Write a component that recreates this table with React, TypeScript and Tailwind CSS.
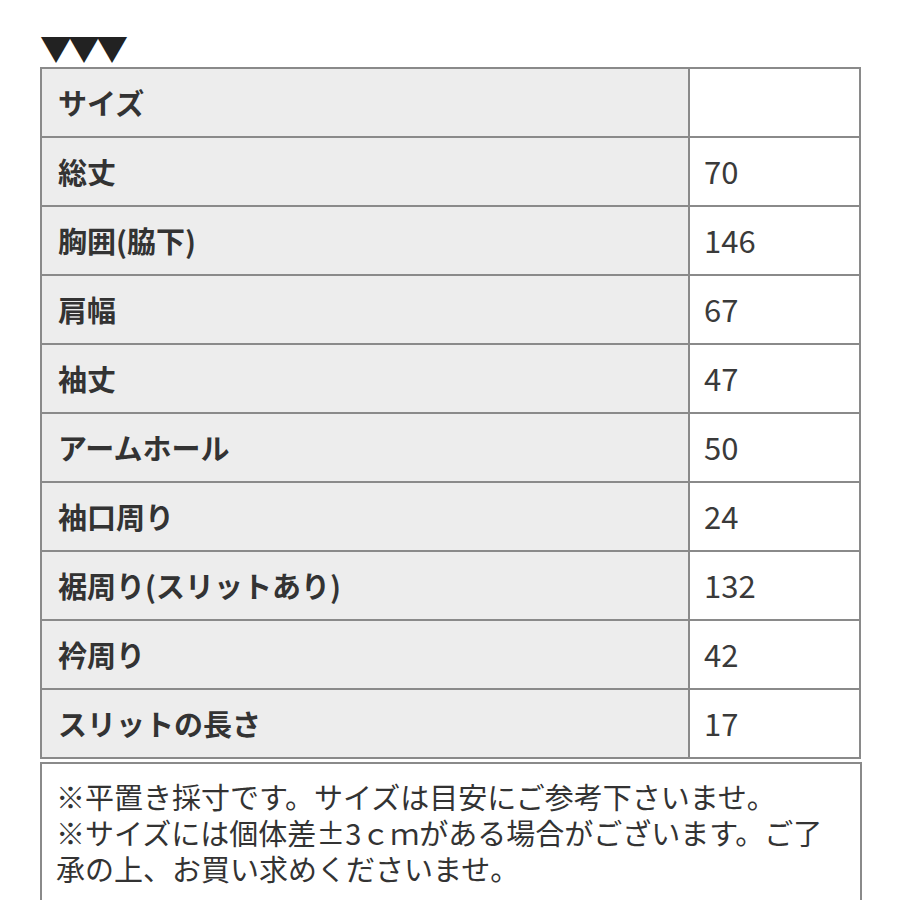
const rows: [string, string][] = [
  ['サイズ', ''],
  ['総丈', '70'],
  ['胸囲(脇下)', '146'],
  ['肩幅', '67'],
  ['袖丈', '47'],
  ['アームホール', '50'],
  ['袖口周り', '24'],
  ['裾周り(スリットあり)', '132'],
  ['衿周り', '42'],
  ['スリットの長さ', '17'],
];

const note =
  '※平置き採寸です。サイズは目安にご参考下さいませ。\n※サイズには個体差±3ｃｍがある場合がございます。ご了承の上、お買い求めくださいませ。';

export default function App() {
  return (
    <div
      className="min-h-[900px] bg-white pl-[40px] pt-[28px] text-[#333]"
      style={{ fontFamily: '"Noto Sans CJK JP", "Noto Sans", sans-serif' }}
    >
      <div className="h-[39px] text-[32px] leading-[39px] tracking-[-4px] text-[#222]">▼▼▼</div>
      <table className="w-[821px] border-collapse border-2 border-[#8a8a8a]">
        <tbody>
          {rows.map(([label, value]) => (
            <tr key={label} className="h-[69px]">
              <td className="w-[648px] border-2 border-[#8a8a8a] bg-[#ededed] pl-[16px] text-[29px] font-bold">
                {label}
              </td>
              <td className="border-2 border-[#8a8a8a] bg-white pl-[14px] text-[31px] text-[#3a3a3a]">
                {value}
              </td>
            </tr>
          ))}
        </tbody>
      </table>
      <div className="mt-[3px] h-[140px] w-[822px] whitespace-pre-line border-2 border-[#8a8a8a] px-[14px] pt-[14px] text-[29px] leading-[36px] text-[#333]">
        {note}
      </div>
    </div>
  );
}
